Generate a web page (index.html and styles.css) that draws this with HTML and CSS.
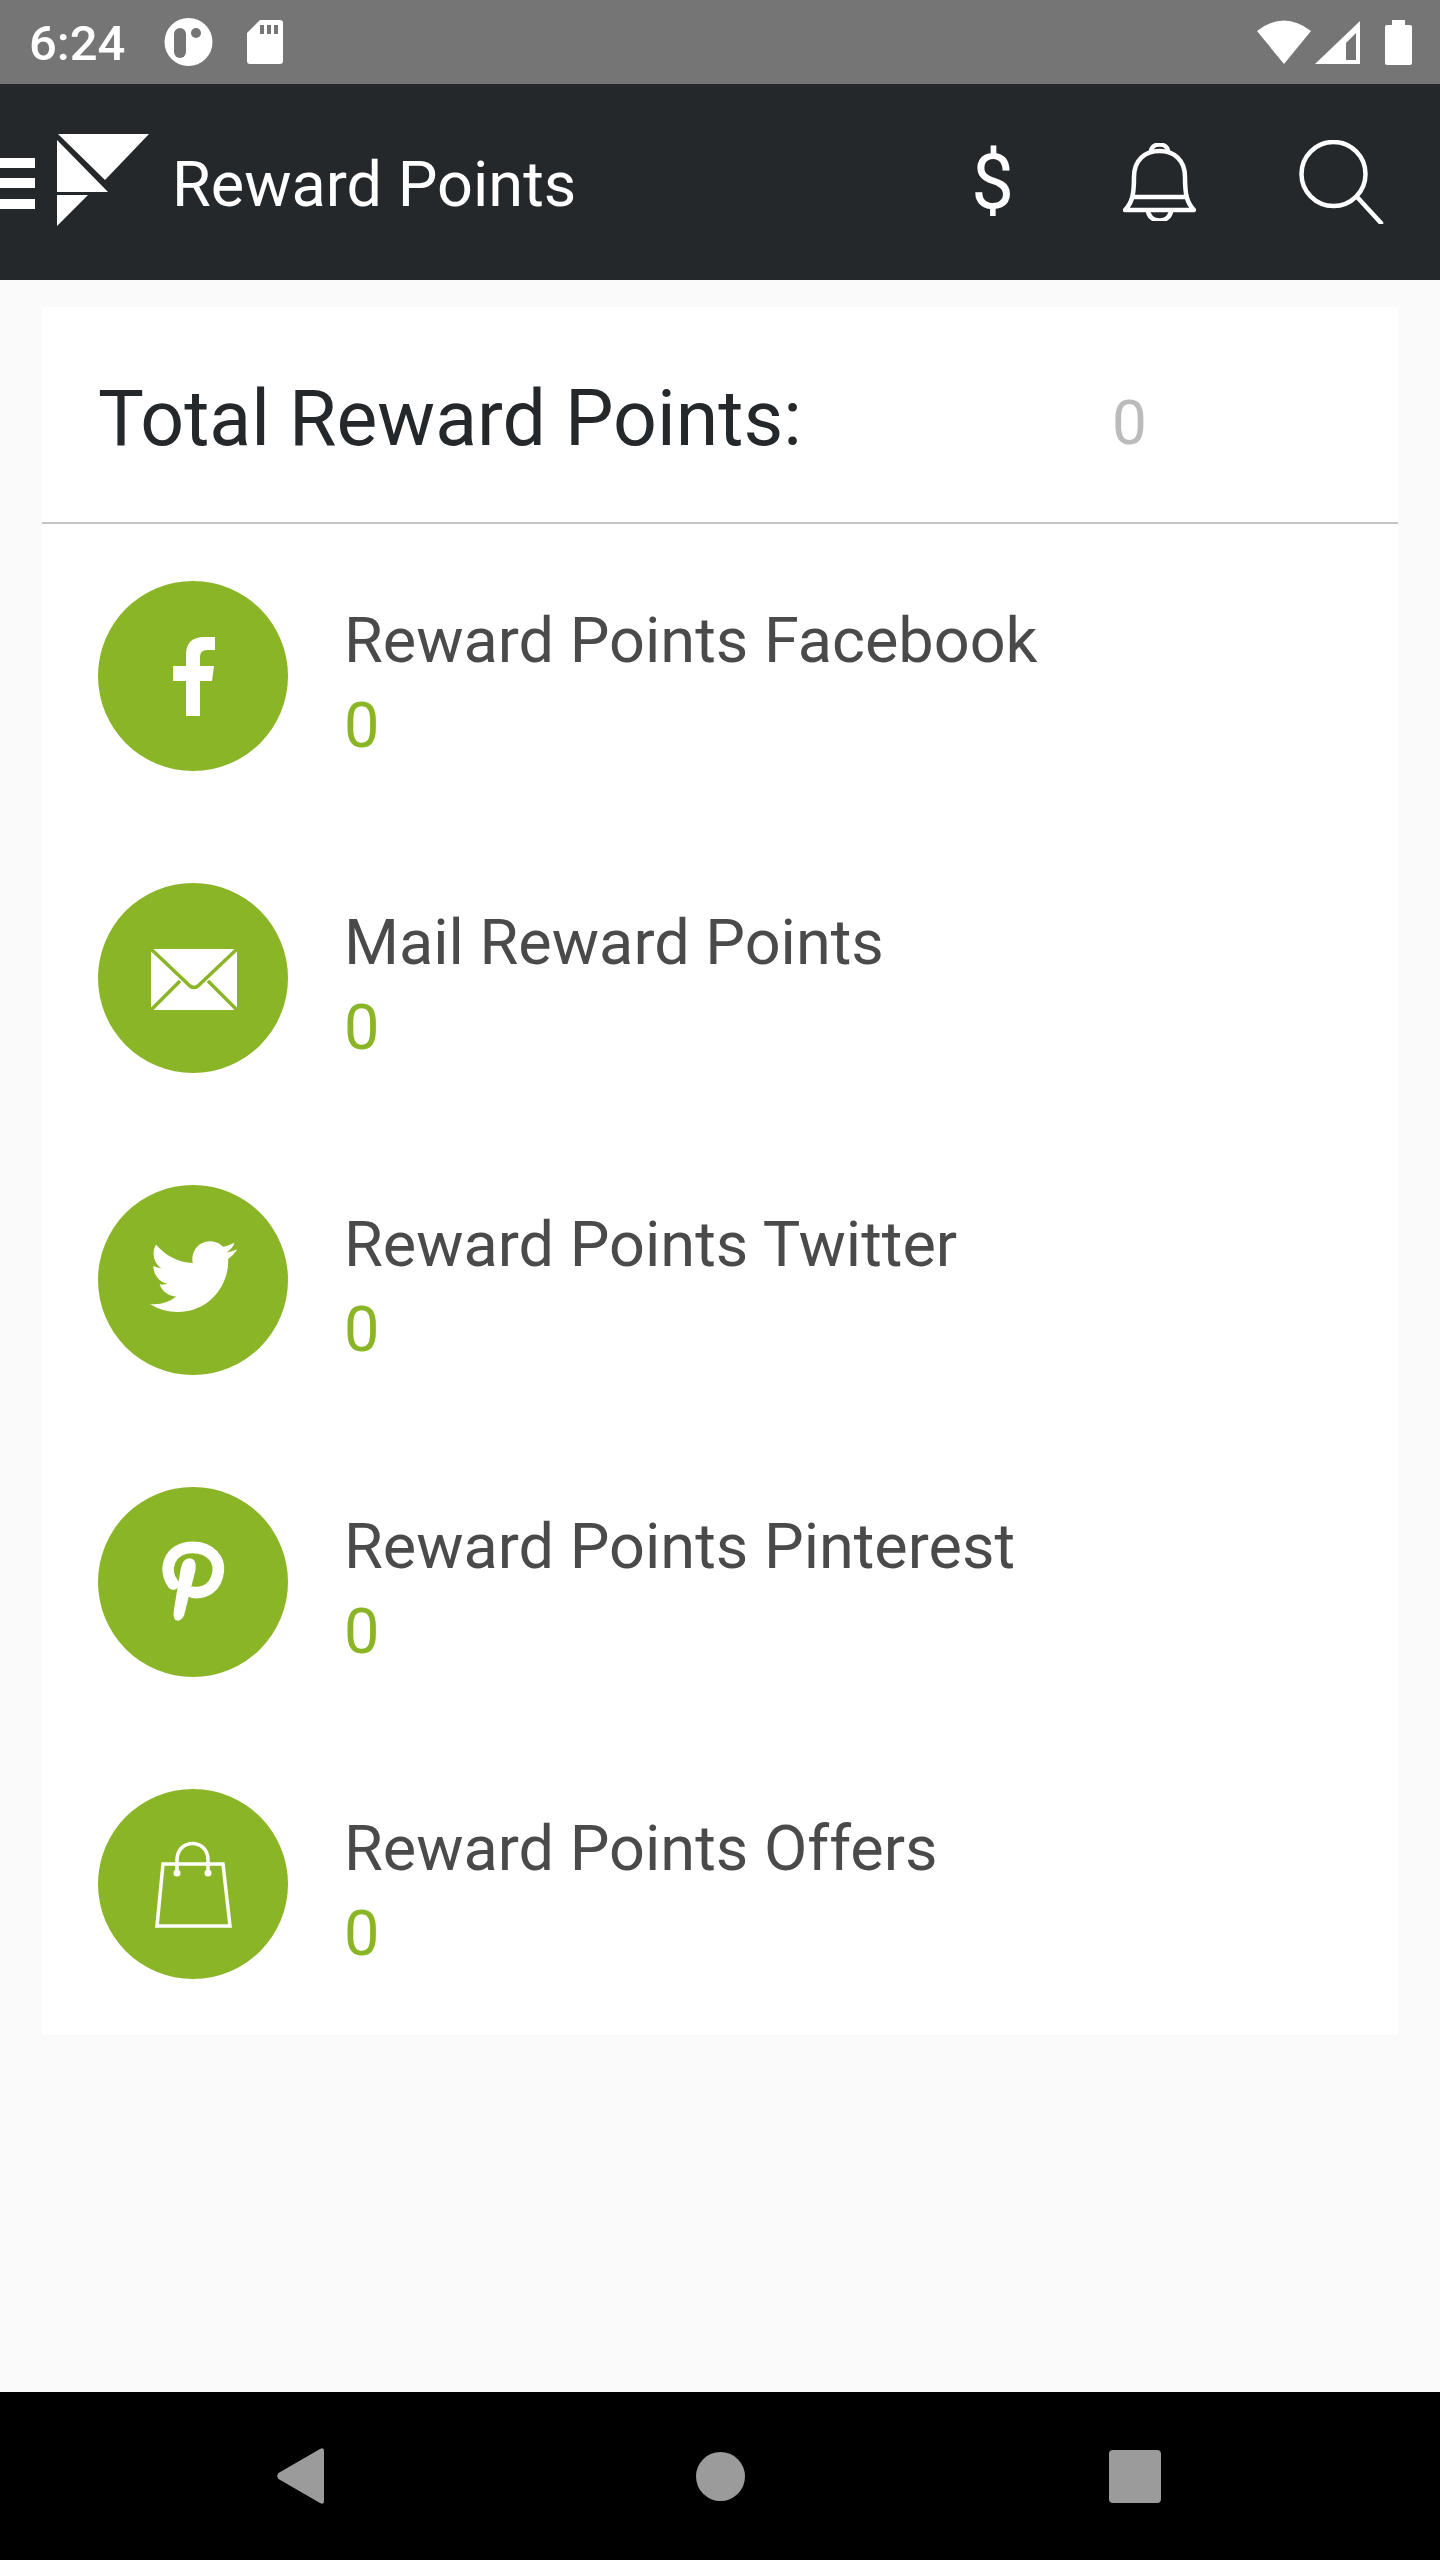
FILE: index.html
```html
<!DOCTYPE html>
<html lang="en">
<head>
  <meta charset="UTF-8" />
  <meta name="viewport" content="width=device-width, initial-scale=1.0" />
  <title>Reward Points</title>
  <link rel="stylesheet" href="styles.css">
</head>
<body>
  <div class="status-bar">
    <span class="time">6:24</span>
    <svg class="st-app" viewBox="0 0 49 48"><circle cx="24.5" cy="24" r="24" fill="#fff"/><rect x="10" y="10" width="12" height="30" rx="6" fill="#757575"/><circle cx="32" cy="15" r="5" fill="#757575"/></svg>
    <svg class="st-sd" viewBox="0 0 36 44"><path d="M13 0H33Q36 0 36 3V41Q36 44 33 44H3Q0 44 0 41V13Z" fill="#fff"/><rect x="13" y="5" width="4" height="9" fill="#757575"/><rect x="20" y="5" width="4" height="9" fill="#757575"/><rect x="27" y="5" width="4" height="9" fill="#757575"/></svg>
    <div class="status-right">
      <svg class="st-wifi" viewBox="0 0 54 44"><path d="M0 11Q27 -10 54 11L27 44Z" fill="#fff"/></svg>
      <svg class="st-signal" viewBox="0 0 45 43"><path d="M0 43L45 0V43Z" fill="#fff"/><path d="M31 39H41V12L31 22Z" fill="#757575"/></svg>
      <svg class="st-battery" viewBox="0 0 27 45"><path d="M7 0H20V5H25Q27 5 27 7V43Q27 45 25 45H2Q0 45 0 43V7Q0 5 2 5H7Z" fill="#fff"/></svg>
    </div>
  </div>

  <header class="app-bar">
    <div class="menu-btn"><span></span><span></span><span></span></div>
    <svg class="logo" viewBox="0 0 92 92"><path d="M1 0H92L48 46Z" fill="#fff"/><path d="M0 6L51 58H0Z" fill="#fff"/><path d="M0 61H31L0 92Z" fill="#fff"/></svg>
    <h1 class="page-title">Reward Points</h1>
    <div class="bar-actions">
      <span class="dollar">$</span>
      <svg class="bell" viewBox="0 0 73 78" fill="none" stroke="#fff" stroke-width="4.5" stroke-linejoin="round"><path d="M28 9C28 -1 45 -1 45 9"/><path d="M2 67C9 60 11 52 11 34C11 17 22 8 36.5 8C51 8 62 17 62 34C62 52 64 60 71 67Z"/><path d="M9 54H64"/><path d="M25 67C25 81 48 81 48 67"/></svg>
      <svg class="search" viewBox="0 0 85 84" fill="none" stroke="#fff" stroke-width="4.5"><circle cx="34.5" cy="34" r="32"/><path d="M59 58L82 83" stroke-linecap="round"/></svg>
    </div>
  </header>

  <main class="content">
    <section class="card">
      <div class="total-row">
        <span class="total-label">Total Reward Points:</span>
        <span class="total-value">0</span>
      </div>
      <ul class="reward-list">
        <li class="reward-item">
          <svg class="reward-icon" viewBox="0 0 190 190"><circle cx="95" cy="95" r="95" fill="#8ab526"/><path d="M102 135V100H114L116 85H102V76Q102 69 109 69H117V56H106Q88 56 88 74V85H75V100H88V135Z" fill="#fff"/></svg>
          <div class="reward-text">
            <div class="reward-name">Reward Points Facebook</div>
            <div class="reward-value">0</div>
          </div>
        </li>
        <li class="reward-item">
          <svg class="reward-icon" viewBox="0 0 190 190"><circle cx="95" cy="95" r="95" fill="#8ab526"/><rect x="53" y="66" width="86" height="61" fill="#fff"/><path d="M53 66L92 103Q96 106 100 103L139 66M53 127L82 98M139 127L110 98" fill="none" stroke="#8ab526" stroke-width="3.5"/></svg>
          <div class="reward-text">
            <div class="reward-name">Mail Reward Points</div>
            <div class="reward-value">0</div>
          </div>
        </li>
        <li class="reward-item">
          <svg class="reward-icon" viewBox="0 0 190 190"><circle cx="95" cy="95" r="95" fill="#8ab526"/><g transform="translate(52 48) scale(3.63)"><path d="M23.953 4.57a10 10 0 01-2.825.775 4.958 4.958 0 002.163-2.723c-.951.555-2.005.959-3.127 1.184a4.92 4.92 0 00-8.384 4.482C7.69 8.095 4.067 6.13 1.64 3.162a4.822 4.822 0 00-.666 2.475c0 1.71.87 3.213 2.188 4.096a4.904 4.904 0 01-2.228-.616v.06a4.923 4.923 0 003.946 4.827 4.996 4.996 0 01-2.212.085 4.936 4.936 0 004.604 3.417 9.867 9.867 0 01-6.102 2.105c-.39 0-.779-.023-1.17-.067a13.995 13.995 0 007.557 2.209c9.053 0 13.998-7.496 13.998-13.985 0-.21 0-.42-.015-.63A9.935 9.935 0 0024 4.59z" fill="#fff"/></g></svg>
          <div class="reward-text">
            <div class="reward-name">Reward Points Twitter</div>
            <div class="reward-value">0</div>
          </div>
        </li>
        <li class="reward-item">
          <svg class="reward-icon" viewBox="0 0 190 190"><circle cx="95" cy="95" r="95" fill="#8ab526"/><g transform="translate(42 32) scale(.3333)"><path d="M100 195C68 155 85 85 158 85C215 85 238 125 235 155C230 205 195 225 158 220" fill="none" stroke="#fff" stroke-width="35" stroke-linecap="round"/><path d="M122 150Q128 118 148 118Q172 120 166 155L132 290Q120 310 106 303Q98 295 102 270Z" fill="#fff"/></g></svg>
          <div class="reward-text">
            <div class="reward-name">Reward Points Pinterest</div>
            <div class="reward-value">0</div>
          </div>
        </li>
        <li class="reward-item">
          <svg class="reward-icon" viewBox="0 0 190 190"><circle cx="95" cy="95" r="95" fill="#8ab526"/><path d="M65 75H125L132 137H59Z" fill="none" stroke="#fff" stroke-width="3.5"/><path d="M79 84V71C79 49 110 49 110 71V84" fill="none" stroke="#fff" stroke-width="3.5"/><circle cx="79" cy="84" r="3.5" fill="#fff"/><circle cx="110" cy="84" r="3.5" fill="#fff"/></svg>
          <div class="reward-text">
            <div class="reward-name">Reward Points Offers</div>
            <div class="reward-value">0</div>
          </div>
        </li>
      </ul>
    </section>
  </main>

  <nav class="nav-bar">
    <svg class="nav-back" viewBox="0 0 47 56"><path d="M1.5 25L43 1Q47 -1 47 3V53Q47 57 43 55L1.5 31Q-1 28 1.5 25Z" fill="#9b9b9b"/></svg>
    <span class="nav-home"></span>
    <span class="nav-recent"></span>
  </nav>
</body>
</html>
```

FILE: styles.css
```css
* {
  box-sizing: border-box;
}

body {
  margin: 0;
  width: 1440px;
  height: 2560px;
  display: flex;
  flex-direction: column;
  font-family: Roboto, "Liberation Sans", sans-serif;
  background-color: #fafafa;
  overflow: hidden;
}

svg {
  display: block;
  flex-shrink: 0;
}

/* status bar */
.status-bar {
  height: 84px;
  background-color: #757575;
  color: #fff;
  display: flex;
  align-items: center;
  padding: 0 28px 0 29px;
}

.time {
  width: 95px;
  font-size: 49px;
  font-weight: 500;
  margin-top: 2px;
}

.st-app {
  width: 49px;
  height: 48px;
  margin-left: 40px;
}

.st-sd {
  width: 36px;
  height: 44px;
  margin-left: 34px;
}

.status-right {
  margin-left: auto;
  display: flex;
  align-items: center;
}

.st-wifi {
  width: 54px;
  height: 44px;
}

.st-signal {
  width: 45px;
  height: 43px;
  margin-left: 4px;
}

.st-battery {
  width: 27px;
  height: 45px;
  margin-left: 25px;
}

/* app bar */
.app-bar {
  height: 196px;
  background-color: #25282b;
  color: #fff;
  display: flex;
  align-items: center;
  padding-right: 56px;
}

.menu-btn {
  width: 35px;
  height: 51px;
  display: flex;
  flex-direction: column;
  justify-content: space-between;
  margin-top: 2px;
}

.menu-btn span {
  height: 10px;
  background-color: #fff;
}

.logo {
  width: 92px;
  height: 92px;
  margin-left: 22px;
  margin-top: -4px;
}

.page-title {
  margin: 4px 0 0 23px;
  font-size: 63px;
  font-weight: 400;
}

.bar-actions {
  margin-left: auto;
  display: flex;
  align-items: center;
}

.dollar {
  font-size: 76px;
  font-weight: 400;
}

.bell {
  width: 73px;
  height: 78px;
  margin-left: 109px;
}

.search {
  width: 85px;
  height: 84px;
  margin-left: 103px;
}

/* content */
.content {
  flex: 1;
  padding: 27px 42px 0;
}

.card {
  background-color: #fff;
}

.total-row {
  height: 217px;
  display: flex;
  align-items: center;
  padding-left: 56px;
  border-bottom: 2px solid #c4c4c4;
}

.total-label {
  width: 1014px;
  font-size: 77px;
  color: #25282b;
  margin-top: 8px;
}

.total-value {
  font-size: 62px;
  color: #bbb;
  margin-top: 16px;
}

.reward-list {
  list-style: none;
  margin: 0;
  padding: 57px 0 56px 56px;
  display: flex;
  flex-direction: column;
  gap: 112px;
}

.reward-item {
  display: flex;
  gap: 56px;
}

.reward-icon {
  width: 190px;
  height: 190px;
}

.reward-text {
  padding-top: 18px;
  font-size: 63px;
  line-height: 84px;
}

.reward-name {
  color: #4a4a4a;
}

.reward-value {
  color: #8ab526;
  margin-top: 1px;
}

/* android nav */
.nav-bar {
  height: 168px;
  background-color: #000;
  display: flex;
  align-items: center;
}

.nav-back {
  width: 47px;
  height: 56px;
  margin-left: 277px;
}

.nav-home {
  width: 49px;
  height: 49px;
  border-radius: 50%;
  background-color: #9b9b9b;
  margin-left: 372px;
}

.nav-recent {
  width: 52px;
  height: 53px;
  border-radius: 4px;
  background-color: #9b9b9b;
  margin-left: 364px;
}
```
